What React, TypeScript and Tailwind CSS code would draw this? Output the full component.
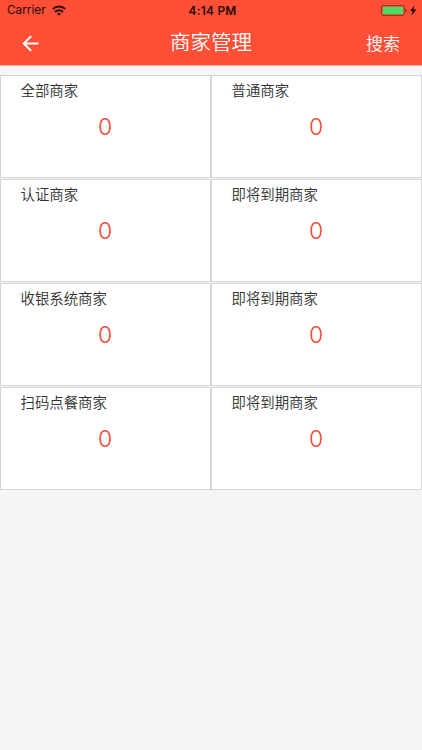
const cards = [
  { label: '全部商家', count: 0 },
  { label: '普通商家', count: 0 },
  { label: '认证商家', count: 0 },
  { label: '即将到期商家', count: 0 },
  { label: '收银系统商家', count: 0 },
  { label: '即将到期商家', count: 0 },
  { label: '扫码点餐商家', count: 0 },
  { label: '即将到期商家', count: 0 },
];

const WifiIcon = () => (
  <svg width="14" height="11" viewBox="0 0 14 11" fill="none" stroke="#2a0c06" strokeWidth="2.1">
    <path d="M0.8 4.1C4.3 0.7 9.7 0.7 13.2 4.1" />
    <path d="M3.1 6.9C5.3 4.9 8.7 4.9 10.9 6.9" />
    <path d="M7 10.6L4.9 8.7C6.1 7.6 7.9 7.6 9.1 8.7Z" fill="#2a0c06" stroke="none" />
  </svg>
);

const BatteryIcon = () => (
  <svg width="36" height="11" viewBox="0 0 36 11">
    <rect x="0.6" y="0.6" width="22.8" height="9.8" rx="1.8" fill="none" stroke="#a5331f" strokeWidth="1.1" />
    <rect x="1.8" y="1.8" width="20.4" height="7.4" rx="0.6" fill="#4cd964" />
    <path d="M24.4 3.7C25.9 4.2 25.9 6.8 24.4 7.3Z" fill="#7c2415" />
    <path d="M33.2 0.4L29.2 6.1H31.7L30.6 10.8L35.2 4.6H32.4Z" fill="#160503" />
  </svg>
);

const BackIcon = () => (
  <svg width="17" height="17" viewBox="0 0 17 17" fill="none" stroke="#fff" strokeWidth="2">
    <path d="M16.6 8.5H2" />
    <path d="M9.2 1.1L1.8 8.5L9.2 15.9" />
  </svg>
);

const StatusBar = () => (
  <div className="grid h-[21px] grid-cols-3 items-center pr-[5px] pl-[7px] font-['Inter','Liberation_Sans',sans-serif] text-[#240a05]">
    <div className="flex items-center gap-1.5">
      <span className="pt-px text-[11.8px] leading-none">Carrier</span>
      <WifiIcon />
    </div>
    <span className="pt-[2px] pl-px text-center text-[11.8px] leading-none font-semibold tracking-[0.3px]">4:14 PM</span>
    <div className="flex justify-end">
      <BatteryIcon />
    </div>
  </div>
);

export default function App() {
  return (
    <div className="min-h-screen bg-[#f5f5f5] font-['Noto_Sans_CJK_SC',sans-serif]">
      <header className="h-[66px] border-b border-[#ffb0a2] bg-[#ff4f37] text-white">
        <StatusBar />
        <div className="grid h-11 grid-cols-3 items-center px-[22px]">
          <button className="justify-self-start" aria-label="返回">
            <BackIcon />
          </button>
          <h1 className="pb-[3px] text-center text-[20.5px] leading-none font-[350] whitespace-nowrap">商家管理</h1>
          <button className="justify-self-end pb-[2px] text-[17px] leading-none font-[350]">搜索</button>
        </div>
      </header>

      <main className="mt-[9px] grid grid-cols-2 gap-y-px">
        {cards.map((card, i) => (
          <section key={i} className="h-[103px] border border-[#d6d6d9] bg-white pt-1">
            <p className="pl-[19.5px] text-[14.4px] leading-5 font-[350] text-[#303030]">{card.label}</p>
            <p className="mt-3 pr-px text-center font-['Inter',sans-serif] text-[23px] leading-[30px] font-light text-[#ef4a35]">
              {card.count}
            </p>
          </section>
        ))}
      </main>
    </div>
  );
}
